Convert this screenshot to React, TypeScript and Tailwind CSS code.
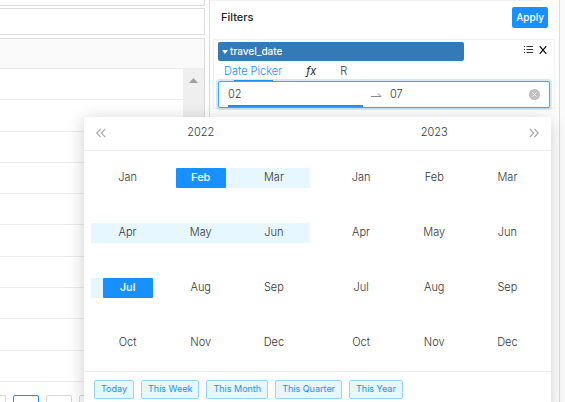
import { useState } from "react";

const MONTHS = ["Jan", "Feb", "Mar", "Apr", "May", "Jun", "Jul", "Aug", "Sep", "Oct", "Nov", "Dec"];
const PRESETS = ["Today", "This Week", "This Month", "This Quarter", "This Year"];
const ROWS = Array.from({ length: 10 });

function ResultsPane() {
    return (
        <section className="flex min-w-0 flex-1 flex-col" aria-label="Results">
            <div className="h-[6px] shrink-0 border-r border-b border-[#dcdcdc]"/>
            <div className="mt-[2px] h-[27px] shrink-0 border-y border-r border-[#dcdcdc]"/>
            <div className="mt-[3px] shrink-0 border-t border-r border-[#dcdcdc]">
                <div className="h-[30px] border-b border-[#ececec] bg-[#fafafa]"/>
                <div className="flex h-[313px]">
                    <div className="flex flex-1 flex-col">
                        {ROWS.map((_, index) => (
                            <div key={index} className="flex-1 border-b border-[#ececec]"/>
                        ))}
                    </div>
                    <div className="flex w-[21px] justify-center bg-[#efefef] pt-[9px]">
                        <svg width="9" height="5" viewBox="0 0 9 5" fill="#a0a0a0">
                            <path d="M4.5 0 9 5H0z"/>
                        </svg>
                    </div>
                </div>
            </div>
            <div className="mt-[13px] flex shrink-0 gap-[7px] overflow-hidden">
                <div className="h-[26px] w-[6px] shrink-0 border-t border-r border-[#d9d9d9]"/>
                <div className="h-[26px] w-[26px] shrink-0 rounded-xs border border-[#1890ff]"/>
                <div className="h-[26px] w-[26px] shrink-0 rounded-xs border border-[#d9d9d9]"/>
                <div className="h-[26px] w-[26px] shrink-0 rounded-xs border border-[#d9d9d9]"/>
            </div>
        </section>
    );
}

function MonthPanel({ year, start, end }: { year: string, start?: number, end?: number }) {
    const hasRange = start !== undefined && end !== undefined;

    return (
        <div className="flex-1">
            <div className="flex h-[34px] items-center justify-center border-b border-[#ececec] pb-[3px] text-[#333]">
                {year}
            </div>
            <div className="grid grid-cols-3 px-[7px]">
                {MONTHS.map((month, index) => {
                    const isStart = hasRange && index === start;
                    const isEnd = hasRange && index === end;
                    const inRange = hasRange && index > start && index < end;
                    return (
                        <div key={month} className="flex h-[55px] items-center pb-px">
                            <div className={`h-5 flex-1 ${isEnd || inRange ? "bg-[#e6f7ff]" : ""}`}/>
                            <button
                                type="button"
                                className={`h-5 w-[50px] pb-px ${isStart || isEnd
                                    ? "rounded-[1px] bg-[#1890ff] font-medium text-white"
                                    : inRange ? "bg-[#e6f7ff] text-[#333]" : "text-[#333]"}`}
                            >
                                {month}
                            </button>
                            <div className={`h-5 flex-1 ${isStart || inRange ? "bg-[#e6f7ff]" : ""}`}/>
                        </div>
                    );
                })}
            </div>
        </div>
    );
}

function RangeDropdown() {
    return (
        <div className="absolute top-full -right-px z-10 mt-[9px] w-[467px] rounded-xs bg-white pb-3 shadow-[0_3px_18px_rgba(0,0,0,0.2)]">
            <div className="relative flex">
                <MonthPanel year="2022" start={1} end={6}/>
                <MonthPanel year="2023"/>
                <button type="button" aria-label="Previous year" className="absolute top-[11px] left-3 text-[#a8a8a8]">
                    <svg width="10" height="10" viewBox="0 0 10 10" fill="none" stroke="currentColor" strokeWidth="1.2">
                        <path d="M4.7.8.8 5l3.9 4.2M9.2.8 5.3 5l3.9 4.2"/>
                    </svg>
                </button>
                <button type="button" aria-label="Next year" className="absolute top-[11px] right-3 text-[#a8a8a8]">
                    <svg width="10" height="10" viewBox="0 0 10 10" fill="none" stroke="currentColor" strokeWidth="1.2">
                        <path d="M.8.8 4.7 5 .8 9.2M5.3.8 9.2 5 5.3 9.2"/>
                    </svg>
                </button>
            </div>
            <div className="flex gap-[7px] border-t border-[#ececec] px-[10px] pt-2">
                {PRESETS.map((preset) => (
                    <button
                        key={preset}
                        type="button"
                        className="h-[19px] rounded-xs border border-[#91d5ff] bg-[#e6f7ff] px-[6px] pb-px text-[9px] leading-4 font-normal whitespace-nowrap text-[#1890ff]"
                    >
                        {preset}
                    </button>
                ))}
            </div>
        </div>
    );
}

function FilterCard() {
    const [from, setFrom] = useState("02");
    const [to, setTo] = useState("07");

    return (
        <div className="mr-1 ml-[3px] border border-[#f0f0f0] px-1 pt-[2px]">
            <div className="flex items-center">
                <button type="button" className="flex h-[19px] flex-1 items-center gap-[2px] rounded-xs bg-[#337ab7] px-1 text-[10px] font-medium text-white">
                    <svg width="6" height="4" viewBox="0 0 6 4" fill="currentColor">
                        <path d="M0 0h6L3 4z"/>
                    </svg>
                    travel_date
                </button>
                <div className="flex w-[86px] items-center justify-end gap-[6px] pr-[3px] pb-[3px] text-black">
                    <button type="button" aria-label="Options">
                        <svg width="9" height="8" viewBox="0 0 9 8" stroke="#333">
                            <path d="M0 .5h1M2.5.5H9M0 3.5h1M2.5 3.5H9M0 6.5h1M2.5 6.5H9"/>
                        </svg>
                    </button>
                    <button type="button" aria-label="Remove filter">
                        <svg width="8" height="8" viewBox="0 0 8 8" fill="none" stroke="currentColor" strokeWidth="1.2">
                            <path d="M.7.2l6.6 7.6M7.3.2.7 7.8"/>
                        </svg>
                    </button>
                </div>
            </div>
            <div className="flex h-5 gap-6 px-[6px] leading-5 text-[#333]">
                <button type="button" className="relative text-[#1890ff]">
                    Date Picker
                    <span className="absolute bottom-0 left-[10px] h-px w-[39px] bg-[#1890ff]"/>
                </button>
                <button type="button" className="font-normal text-[#222] italic">fx</button>
                <button type="button">R</button>
            </div>
            <div className="relative">
                <div className="flex h-[27px] items-center rounded-xs border border-[#40a9ff] bg-white pr-[9px] pl-[9px] text-[#333] shadow-[0_0_0_2px_rgba(24,144,255,0.2)]">
                    <input
                        aria-label="Start month"
                        className="h-full w-[135px] border-b-2 border-[#1890ff] outline-none"
                        value={from}
                        onChange={(event) => setFrom(event.target.value)}
                    />
                    <svg className="mx-2 shrink-0" width="11" height="6" viewBox="0 0 11 6" fill="none" stroke="#888">
                        <path d="M0 4.5h10L7 1.5"/>
                    </svg>
                    <input
                        aria-label="End month"
                        className="h-full min-w-0 flex-1 border-b-2 border-transparent outline-none"
                        value={to}
                        onChange={(event) => setTo(event.target.value)}
                    />
                    <button type="button" aria-label="Clear">
                        <svg width="11" height="11" viewBox="0 0 11 11">
                            <circle cx="5.5" cy="5.5" r="5.5" fill="#bfbfbf"/>
                            <path d="M3.5 3.5l4 4m0-4l-4 4" stroke="#fff"/>
                        </svg>
                    </button>
                </div>
                <RangeDropdown/>
            </div>
        </div>
    );
}

function App() {
    return (
        <main className="flex h-screen overflow-hidden bg-white font-[Inter,sans-serif] text-[11px] font-light">
            <ResultsPane/>
            <section className="ml-1 w-[351px] shrink-0 border-x border-[#dcdcdc]">
                <div className="mr-4 border-t border-[#f0f0f0]"/>
                <header className="flex h-[38px] items-start justify-between px-[11px] pt-[6px]">
                    <h2 className="leading-5 font-medium text-[#222]">Filters</h2>
                    <button type="button" className="h-[21px] rounded-xs bg-[#1890ff] px-1 text-[10px] font-medium text-white">
                        Apply
                    </button>
                </header>
                <FilterCard/>
            </section>
            <div className="w-[5px] shrink-0 bg-[#fafafa]"/>
        </main>
    );
}

export default App;
